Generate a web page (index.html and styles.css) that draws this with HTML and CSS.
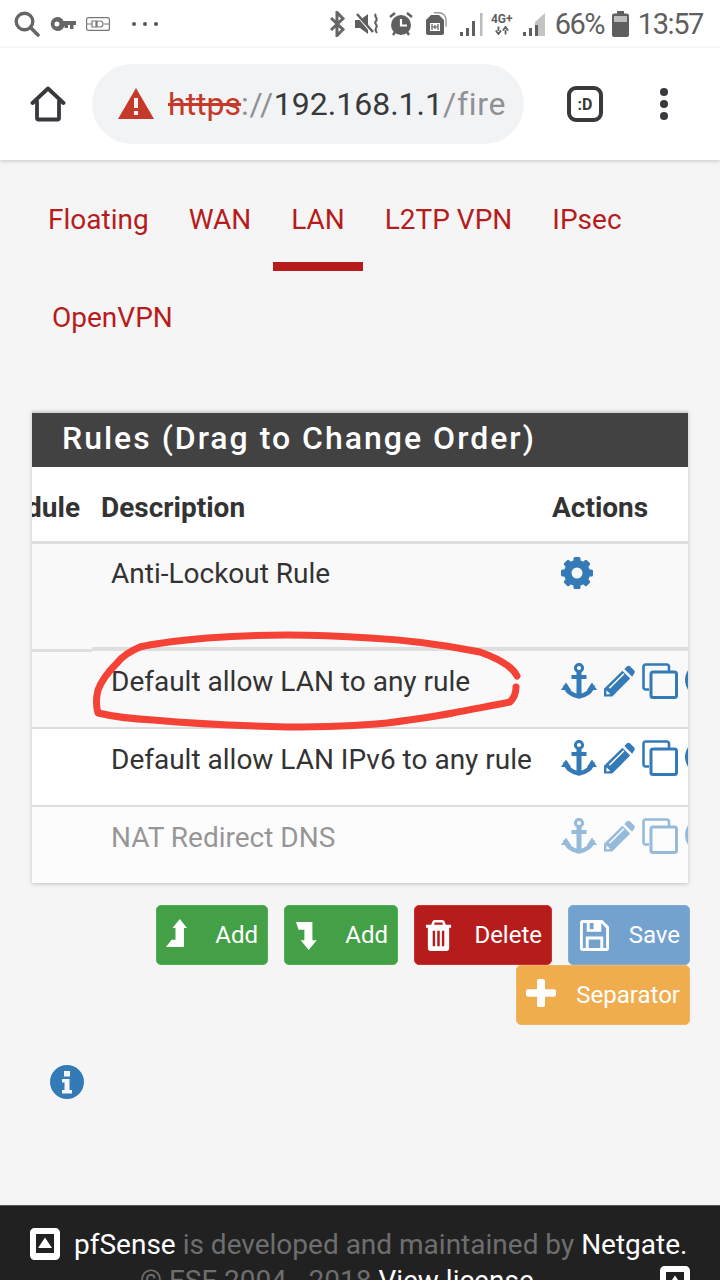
FILE: index.html
```html
<!DOCTYPE html>
<html lang="en">

<head>
    <meta charset="UTF-8">
    <meta name="viewport" content="width=device-width, initial-scale=1.0">
    <title>Firewall Rules</title>
    <link rel="stylesheet" href="styles.css">
</head>

<body>
    <!-- shared action icons -->
    <svg class="icon-defs" width="0" height="0">
        <symbol id="i-anchor" viewBox="0 0 36 36">
            <circle cx="18" cy="5" r="3.600" fill="none" stroke="currentColor" stroke-width="3"/>
            <path d="M15.500 8h5v24h-5zM10.500 12h15v4h-15z" fill="currentColor"/>
            <path d="M4.500 22c.5 6.500 7 10.500 13.500 11.500c6.500-1 13-5 13.500-11.500" fill="none" stroke="currentColor" stroke-width="4.400"/>
            <path d="M0 27L5 19.500L10 27zM36 27L31 19.500L26 27z" fill="currentColor"/>
        </symbol>
        <symbol id="i-pencil" viewBox="0 0 32 32">
            <path d="M0 32V24L19 5.500L27 13.500L8.500 32z" fill="currentColor"/>
            <path d="M21 3.500L23.500 1c1-1 2.500-1 3.500 0L31 5c1 1 1 2.500 0 3.500L29 11.500z" fill="currentColor"/>
            <path d="M5.500 23.500L20.500 8.500" stroke="#fff" stroke-width="1.600" fill="none"/>
            <path d="M2.500 25.500L6.500 29.500L2.500 30z" fill="#fff"/>
        </symbol>
        <symbol id="i-copy" viewBox="0 0 36 36">
            <path d="M7 26.500H3.500c-1 0-2-1-2-2V3.500c0-1 1-2 2-2H25c1 0 2 1 2 2V8" fill="none" stroke="currentColor" stroke-width="2.600"/>
            <rect x="9" y="9" width="25.500" height="25.500" rx="2" fill="none" stroke="currentColor" stroke-width="3"/>
        </symbol>
        <symbol id="i-logo" viewBox="0 0 30 32">
            <path fill-rule="evenodd" d="M5 0h20c3 0 5 2 5 5v22c0 3-2 5-5 5H5c-3 0-5-2-5-5V5c0-3 2-5 5-5zM6 6v19h18V6zM15 9.500L22 20H8z" fill="#fff"/>
        </symbol>
    </svg>

    <div class="status-bar">
        <div class="status-group">
            <svg class="st-search" viewBox="0 0 26 26"><circle cx="10.500" cy="10.500" r="8.300" fill="none" stroke="#666" stroke-width="3.400"/><path d="M16.500 16.500L24 24" stroke="#666" stroke-width="3.600" stroke-linecap="round"/></svg>
            <svg class="st-key" viewBox="0 0 26 14"><path fill-rule="evenodd" d="M7 0a7 7 0 0 1 6.500 4H26v4h-2.500v4h-3.500V8h-2v3h-3.500V8.500A7 7 0 1 1 7 0zM7 4.500a2.500 2.500 0 1 0 0 5a2.500 2.500 0 0 0 0-5z" fill="#666"/></svg>
            <svg class="st-vpn" viewBox="0 0 24 14"><rect x=".6" y=".6" width="22.800" height="12.800" rx="2" fill="none" stroke="#777" stroke-width="1.200"/><path d="M1 7h5M18 7h5M6 4h4v6H6zM11 4h3a3 3 0 0 1 0 6h-3z" fill="none" stroke="#777" stroke-width="1.200"/></svg>
            <div class="st-dots"><span></span><span></span><span></span></div>
        </div>
        <div class="status-group status-right">
            <svg class="st-bt" viewBox="0 0 16 26"><path d="M2 7L14 18.500L8 24.500V1.500L14 7.500L2 19" fill="none" stroke="#666" stroke-width="3"/></svg>
            <svg class="st-mute" viewBox="0 0 26 22"><path d="M0 7h5L13 1V21L5 15H0z" fill="#5f5f5f"/><path d="M1 1L17 20" stroke="#fff" stroke-width="2"/><path d="M2 1L18 19" stroke="#5f5f5f" stroke-width="2.500"/><path d="M21 1c-3 3 3 3.500 0 7c-3 3 3 3.500 0 7c-1.500 2 0 3 1 5" fill="none" stroke="#5f5f5f" stroke-width="2"/></svg>
            <svg class="st-alarm" viewBox="0 0 24 24"><circle cx="12" cy="13" r="10" fill="#5f5f5f"/><path d="M12 7v6.500h6" fill="none" stroke="#fff" stroke-width="2.200"/><path d="M1 5L6 1M23 5L18 1M4 23l2-3M20 23l-2-3" stroke="#5f5f5f" stroke-width="2.400"/></svg>
            <svg class="st-sim" viewBox="0 0 22 24"><path d="M6 3h8l5 5v13c0 1-1 2-2 2H3c-1 0-2-1-2-2V8z" fill="#5f5f5f"/><rect x="5" y="11" width="10" height="8" fill="#fff"/><path d="M7 12v6M13 12v6M7 15h6M10 13v4" stroke="#5f5f5f" stroke-width="1.200"/><path d="M9 .8h5c4 0 7 3 7 7v7" fill="none" stroke="#999" stroke-width="1.400"/></svg>
            <svg class="st-signal" viewBox="0 0 24 24"><path d="M1 20h3v4H1zM7 16h3v8H7zM13 9h3v15h-3z" fill="#5f5f5f"/><path d="M21 1h2.500v23H21z" fill="#bbb"/></svg>
            <div class="st-net">
                <span class="st-net-label">4G+</span>
                <svg viewBox="0 0 18 9"><path d="M5 0v5M2 4.500L5 8.500L8 4.500M13 9V4M10 4.500L13 .5L16 4.500" fill="none" stroke="#5f5f5f" stroke-width="2"/></svg>
            </div>
            <svg class="st-signal-2" viewBox="0 0 24 24"><path d="M1 20h3v4H1zM7 16h3v8H7z" fill="#5f5f5f"/><path d="M13 10L23 1V24H13z" fill="#c4c4c4"/><path d="M13 13h3v11h-3z" fill="#5f5f5f"/></svg>
            <span class="st-percent">66%</span>
            <svg class="st-battery" viewBox="0 0 17 26"><path d="M5 0h7v2.500h3c1 0 2 1 2 2V24c0 1-1 2-2 2H2c-1 0-2-1-2-2V4.500c0-1 1-2 2-2h3z" fill="#5f5f5f"/><path d="M2 5h13v6H2z" fill="#bdbdbd"/></svg>
            <span class="st-time">13:57</span>
        </div>
    </div>

    <div class="toolbar">
        <svg class="home-icon" viewBox="0 0 36 36"><path d="M2.500 17L18 2.500L33.500 17M7 15v17c0 1 .5 1.500 1.500 1.500h19c1 0 1.500-.5 1.500-1.500V15" fill="none" stroke="#37393c" stroke-width="3.800" stroke-linejoin="round" stroke-linecap="round"/></svg>
        <div class="url-bar">
            <svg class="warn-icon" viewBox="0 0 36 32"><path fill-rule="evenodd" d="M18 0L36 31H0zM16 10v10h4V10zM16 23v4h4v-4z" fill="#c5392a"/></svg>
            <div class="url-text"><span class="url-https">https</span><span class="url-dim">://</span><span class="url-host">192.168.1.1</span><span class="url-dim">/fire</span></div>
        </div>
        <div class="tab-count">:D</div>
        <div class="menu-dots"><span></span><span></span><span></span></div>
    </div>

    <div class="content">
        <ul class="tabs">
            <li class="tab">Floating</li>
            <li class="tab">WAN</li>
            <li class="tab active">LAN</li>
            <li class="tab">L2TP VPN</li>
            <li class="tab">IPsec</li>
            <li class="tab tab-wrap">OpenVPN</li>
        </ul>

        <div class="panel">
            <div class="panel-heading">Rules (Drag to Change Order)</div>

            <div class="row head-row">
                <div class="col-schedule">Schedule</div>
                <div class="col-desc">Description</div>
                <div class="col-actions">Actions</div>
            </div>

            <div class="row rule-first">
                <div class="col-schedule"></div>
                <div class="col-desc">Anti-Lockout Rule</div>
                <div class="col-actions">
                    <svg class="gear-icon" viewBox="0 0 32 32">
                        <g fill="#337ab7">
                            <rect x="12.500" y="0" width="7" height="32" rx="1.500"/>
                            <rect x="12.500" y="0" width="7" height="32" rx="1.500" transform="rotate(45 16 16)"/>
                            <rect x="12.500" y="0" width="7" height="32" rx="1.500" transform="rotate(90 16 16)"/>
                            <rect x="12.500" y="0" width="7" height="32" rx="1.500" transform="rotate(135 16 16)"/>
                        </g>
                        <circle cx="16" cy="16" r="9.250" fill="#f9f9f9" stroke="#337ab7" stroke-width="7.500"/>
                    </svg>
                </div>
            </div>

            <div class="row rule-row striped">
                <div class="col-schedule"></div>
                <div class="col-desc">Default allow LAN to any rule</div>
                <div class="col-actions">
                    <svg class="ic-anchor"><use href="#i-anchor"/></svg>
                    <svg class="ic-pencil"><use href="#i-pencil"/></svg>
                    <svg class="ic-copy"><use href="#i-copy"/></svg>
                    <span class="ic-circle"></span>
                </div>
            </div>

            <div class="row rule-row">
                <div class="col-schedule"></div>
                <div class="col-desc">Default allow LAN IPv6 to any rule</div>
                <div class="col-actions">
                    <svg class="ic-anchor"><use href="#i-anchor"/></svg>
                    <svg class="ic-pencil"><use href="#i-pencil"/></svg>
                    <svg class="ic-copy"><use href="#i-copy"/></svg>
                    <span class="ic-circle"></span>
                </div>
            </div>

            <div class="row rule-row disabled">
                <div class="col-schedule"></div>
                <div class="col-desc">NAT Redirect DNS</div>
                <div class="col-actions">
                    <svg class="ic-anchor"><use href="#i-anchor"/></svg>
                    <svg class="ic-pencil"><use href="#i-pencil"/></svg>
                    <svg class="ic-copy"><use href="#i-copy"/></svg>
                    <span class="ic-circle"></span>
                </div>
            </div>
        </div>

        <div class="button-bar">
            <button class="btn btn-green">
                <svg class="ic-up" viewBox="0 0 21 28"><path d="M13.800 0L21 9H18V28H0L5.500 20.700H9.500V9H6.500z" fill="#fff"/></svg>
                <span>Add</span>
            </button>
            <button class="btn btn-green">
                <svg class="ic-down" viewBox="0 0 21 28"><path d="M0 0H16.400V18.300H20.700L12.700 28L4.700 18.300H8.400V7.700H2.500z" fill="#fff"/></svg>
                <span>Add</span>
            </button>
            <button class="btn btn-red">
                <svg class="ic-trash" viewBox="0 0 26 32"><path fill-rule="evenodd" d="M9 0h8c1 0 2 1 2.500 2l1 3H26v3h-2v21c0 2-1 3-3 3H5c-2 0-3-1-3-3V8H0V5h5.500l1-3C7 1 8 0 9 0zM9 2.500L8.500 5h9L17 2.500zM7 11v16h2.500V11zM11.700 11v16h2.600V11zM16.500 11v16H19V11z" fill="#fff"/></svg>
                <span>Delete</span>
            </button>
            <button class="btn btn-blue">
                <svg class="ic-save" viewBox="0 0 30 32"><path fill-rule="evenodd" d="M3 0H23L30 7V29c0 2-1 3-3 3H3c-2 0-3-1-3-3V3C0 1 1 0 3 0zM3 3V29H6V17H24V29H27V8.500L22 3V12H7V3zM10 3V9.500H14V3zM9 20V29H21V20z" fill="#fff"/></svg>
                <span>Save</span>
            </button>
            <button class="btn btn-orange">
                <svg class="ic-plus" viewBox="0 0 30 30" preserveAspectRatio="none"><path d="M11 2c0-1 1-2 2-2h4c1 0 2 1 2 2v9h9c1 0 2 1 2 2v4c0 1-1 2-2 2h-9v9c0 1-1 2-2 2h-4c-1 0-2-1-2-2v-9H2c-1 0-2-1-2-2v-4c0-1 1-2 2-2h9z" fill="#fff"/></svg>
                <span>Separator</span>
            </button>
        </div>

        <svg class="info-icon" viewBox="0 0 34 34"><path fill-rule="evenodd" d="M17 0a17 17 0 1 1 0 34a17 17 0 0 1 0-34zM14 6v5.500h6V6zM12 14v3.500h2.500V25H12v3.500h10V25h-2.500V14z" fill="#337ab7"/></svg>
    </div>

    <div class="footer">
        <div class="footer-line">
            <svg class="footer-logo"><use href="#i-logo"/></svg>
            <span class="footer-text"><b>pfSense</b> is developed and maintained by <b>Netgate.</b></span>
        </div>
        <div class="footer-line second">
            <span class="footer-text">© ESF 2004 - 2018 <b>View license.</b></span>
            <svg class="footer-logo small"><use href="#i-logo"/></svg>
        </div>
    </div>

    <!-- red marker scribbled on the screenshot -->
    <svg class="scribble" viewBox="0 0 720 1280">
        <path d="M517 676C512 666 497 658 480 652C445 645 410 640 370 638C340 636 315 635 287 635C260 635 235 636 207 638C185 640 160 642 140 647C128 652 121 658 117 663C108 672 101 682 98 690C96 698 96 706 98 713C115 717 135 719 153 720C198 724 243 726 287 727C322 727 355 726 387 723C410 720 432 717 453 713C472 709 492 706 510 702C514 698 516 693 516 687" fill="none" stroke="#f44336" stroke-width="7" stroke-linecap="round" stroke-linejoin="round"/>
    </svg>
</body>
</html>
```

FILE: styles.css
```css
:root {
    --red-color: #b71c1c;
    --blue-color: #337ab7;
    --text-color: #333333;
    --line-color: #dedede;
    --page-color: #f5f5f5;
}

* {
    box-sizing: border-box;
    margin: 0;
    padding: 0;
}

body {
    font-family: Roboto, "Liberation Sans", sans-serif;
    background-color: var(--page-color);
    width: 720px;
    height: 1280px;
    overflow: hidden;
    display: flex;
    flex-direction: column;
    color: var(--text-color);
}

.icon-defs {
    display: none;
}

/* status bar */
.status-bar {
    height: 48px;
    flex: none;
    background-color: white;
    display: flex;
    justify-content: space-between;
    align-items: center;
    padding: 0 17px 0 14px;
}

.status-group {
    display: flex;
    align-items: center;
    color: #5f5f5f;
}

.st-search { width: 26px; height: 26px; margin-right: 10px; }
.st-key { width: 26px; height: 14px; margin-right: 10px; }
.st-vpn { width: 24px; height: 14px; margin-right: 22px; }

.st-dots {
    display: flex;
    gap: 7px;
}

.st-dots span {
    width: 4px;
    height: 4px;
    border-radius: 50%;
    background-color: #555;
}

.st-bt { width: 16px; height: 26px; margin-right: 10px; }
.st-mute { width: 26px; height: 22px; margin-right: 8px; }
.st-alarm { width: 24px; height: 24px; margin-right: 12px; }
.st-sim { width: 22px; height: 24px; margin-right: 12px; }
.st-signal { width: 24px; height: 24px; margin-right: 6px; }
.st-signal-2 { width: 24px; height: 24px; margin-right: 9px; }

.st-net {
    width: 26px;
    margin-right: 7px;
    display: flex;
    flex-direction: column;
    align-items: center;
}

.st-net-label {
    font-size: 12px;
    font-weight: 700;
    line-height: 13px;
}

.st-net svg {
    width: 16px;
    height: 9px;
}

.st-percent {
    font-size: 29px;
    letter-spacing: -1.600px;
    margin-right: 8px;
}

.st-battery { width: 17px; height: 26px; margin-right: 9px; }

.st-time {
    font-size: 29px;
    letter-spacing: -1.400px;
}

/* browser toolbar */
.toolbar {
    height: 112px;
    flex: none;
    background-color: white;
    display: flex;
    align-items: center;
    padding-left: 30px;
    box-shadow: 0 1px 4px rgba(0, 0, 0, 0.2);
    position: relative;
}

.home-icon {
    width: 36px;
    height: 36px;
    margin-right: 26px;
}

.url-bar {
    width: 432px;
    height: 80px;
    border-radius: 40px;
    background-color: #f1f3f4;
    display: flex;
    align-items: center;
    padding-left: 26px;
    overflow: hidden;
}

.warn-icon {
    width: 36px;
    height: 32px;
    margin-right: 14px;
    flex: none;
}

.url-text {
    font-size: 32px;
    white-space: nowrap;
}

.url-https {
    color: #c5392a;
    text-decoration: line-through;
}

.url-dim {
    color: #8f9194;
    letter-spacing: 0.700px;
}

.url-host {
    color: #37393c;
}

.tab-count {
    width: 36px;
    height: 36px;
    margin-left: 43px;
    border: 4px solid #37393c;
    border-radius: 9px;
    font-size: 16px;
    font-weight: 700;
    color: #37393c;
    display: flex;
    justify-content: center;
    align-items: center;
}

.menu-dots {
    margin-left: 57px;
    display: flex;
    flex-direction: column;
    gap: 4px;
}

.menu-dots span {
    width: 8px;
    height: 8px;
    border-radius: 50%;
    background-color: #37393c;
}

/* page */
.content {
    flex: 1;
    min-height: 0;
}

.tabs {
    list-style: none;
    display: flex;
    flex-wrap: wrap;
    column-gap: 4px;
    padding: 13px 0 0 30px;
}

.tab {
    height: 98px;
    padding: 28px 18px 0;
    font-size: 28px;
    line-height: 38px;
    color: var(--red-color);
}

.tab.active {
    border-bottom: 9px solid var(--red-color);
}

.tab-wrap {
    margin-left: 4px;
}

.panel {
    margin: 42px 32px 0;
    background-color: white;
    border-top: 2px solid #d8d8d8;
    box-shadow: 0 1px 4px rgba(0, 0, 0, 0.22);
    overflow: hidden;
}

.panel-heading {
    height: 54px;
    background-color: #424242;
    color: white;
    font-size: 32px;
    font-weight: 500;
    letter-spacing: 2px;
    line-height: 51px;
    padding-left: 30px;
    white-space: nowrap;
}

.row {
    display: flex;
    font-size: 28px;
    border-bottom: 2px solid var(--line-color);
    background-color: white;
}

.col-schedule {
    width: 60px;
    flex: none;
    display: flex;
    justify-content: flex-end;
    overflow: hidden;
    padding-right: 12px;
}

.col-desc {
    width: 460px;
    flex: none;
    padding-left: 19px;
    white-space: nowrap;
}

.col-actions {
    flex: 1;
    min-width: 0;
    display: flex;
    gap: 7px;
    padding-left: 9px;
    overflow: hidden;
}

.head-row {
    height: 77px;
    padding-top: 6px;
    align-items: center;
    font-weight: 700;
    border-bottom-width: 3px;
}

.head-row .col-desc {
    padding-left: 9px;
}

.head-row .col-actions {
    padding-left: 0;
}

/* the first rule's line is offset by a pixel or two past the schedule column */
.rule-first {
    height: 108px;
    border-bottom: none;
    background-color: #f9f9f9;
    line-height: 34px;
}

.rule-first .col-schedule {
    border-bottom: 3px solid var(--line-color);
}

.rule-first .col-desc,
.rule-first .col-actions {
    padding-top: 13px;
    margin-bottom: 1px;
    border-bottom: 4px solid var(--line-color);
}

.gear-icon {
    width: 32px;
    height: 32px;
}

.rule-row {
    height: 78px;
    padding-top: 11px;
    line-height: 34px;
}

.rule-row .col-desc {
    padding-top: 3px;
}

.striped {
    height: 77px;
    background-color: #f9f9f9;
}

.striped .col-desc {
    padding-top: 2px;
}

.rule-row.disabled {
    height: 76px;
    border-bottom: none;
    background-color: #fcfcfc;
}

.disabled .col-desc {
    opacity: 0.5;
}

.disabled .col-actions {
    opacity: 0.5;
}

.ic-anchor, .ic-copy {
    width: 36px;
    height: 36px;
    flex: none;
    color: var(--blue-color);
}

.ic-pencil {
    width: 31px;
    height: 32px;
    flex: none;
    margin-top: 2px;
    color: var(--blue-color);
}

.ic-circle {
    width: 34px;
    height: 34px;
    flex: none;
    border-radius: 50%;
    background-color: var(--blue-color);
}

/* buttons under the table */
.button-bar {
    display: flex;
    flex-wrap: wrap;
    justify-content: flex-end;
    column-gap: 16px;
    margin: 22px 30px 0 150px;
}

.btn {
    height: 60px;
    display: flex;
    align-items: center;
    justify-content: space-between;
    padding: 0 9px;
    border-radius: 5px;
    border: 1px solid transparent;
    color: white;
    font-family: inherit;
    font-size: 24px;
}

.ic-up { width: 21px; height: 28px; margin-bottom: 4px; }
.ic-down { width: 21px; height: 28px; margin: 2px 0 0 2px; }
.ic-trash { width: 29px; height: 31px; }
.ic-save { width: 31px; height: 31px; margin-left: 1px; }
.ic-plus { width: 30px; height: 28px; margin-bottom: 4px; }

.btn-green {
    width: 112px;
    background-color: #43a047;
    border-color: #4caf50;
}

.btn-green + .btn-green {
    width: 114px;
}

.btn-red {
    width: 138px;
    background-color: var(--red-color);
    border-color: #d32f2f;
}

.btn-blue {
    width: 122px;
    background-color: #74a2cf;
    border-color: #7fabd6;
}

.btn-orange {
    width: 174px;
    background-color: #f0ad4e;
    border-color: #f3b562;
}

.info-icon {
    display: block;
    width: 34px;
    height: 34px;
    margin: 40px 0 0 50px;
}

/* footer */
.footer {
    height: 75px;
    flex: none;
    background-color: #212121;
    border-top: 1px solid #555;
    overflow: hidden;
}

.footer-line {
    display: flex;
    align-items: center;
    padding: 22px 0 0 30px;
    height: 54px;
    white-space: nowrap;
}

.footer-logo {
    width: 30px;
    height: 32px;
    flex: none;
    margin-right: 14px;
}

.footer-text {
    font-size: 28px;
    color: #6e6e6e;
}

.footer-text b {
    font-weight: 400;
    color: white;
}

.second {
    padding: 0 0 0 140px;
    height: 40px;
    position: relative;
}

.footer-logo.small {
    position: absolute;
    left: 660px;
    top: 6px;
    margin: 0;
}

/* overlay */
.scribble {
    position: absolute;
    left: 0;
    top: 0;
    width: 720px;
    height: 1280px;
    pointer-events: none;
}
```
